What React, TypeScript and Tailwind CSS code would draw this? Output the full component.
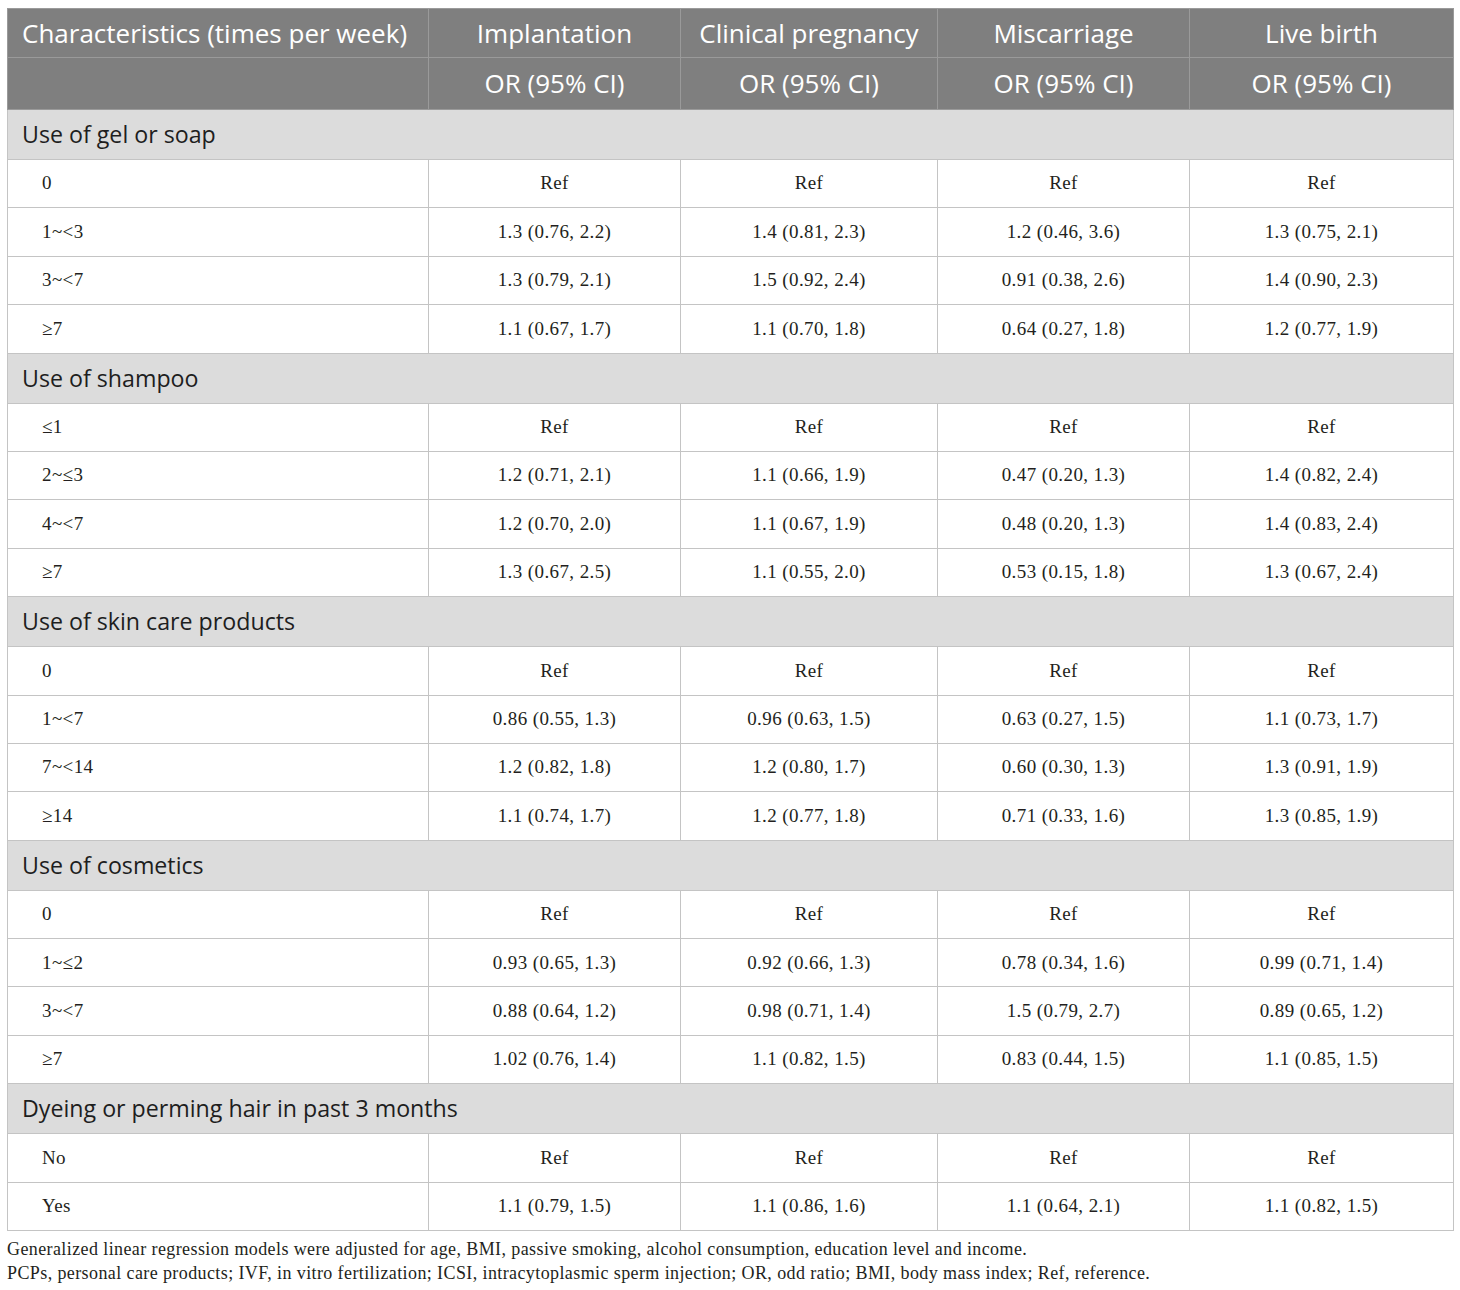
import React from 'react';

type Row = [string, string, string, string, string];
type Section = { title: string; rows: Row[] };

const sections: Section[] = [
  {
    title: 'Use of gel or soap',
    rows: [
      ['0', 'Ref', 'Ref', 'Ref', 'Ref'],
      ['1~<3', '1.3 (0.76, 2.2)', '1.4 (0.81, 2.3)', '1.2 (0.46, 3.6)', '1.3 (0.75, 2.1)'],
      ['3~<7', '1.3 (0.79, 2.1)', '1.5 (0.92, 2.4)', '0.91 (0.38, 2.6)', '1.4 (0.90, 2.3)'],
      ['≥7', '1.1 (0.67, 1.7)', '1.1 (0.70, 1.8)', '0.64 (0.27, 1.8)', '1.2 (0.77, 1.9)'],
    ],
  },
  {
    title: 'Use of shampoo',
    rows: [
      ['≤1', 'Ref', 'Ref', 'Ref', 'Ref'],
      ['2~≤3', '1.2 (0.71, 2.1)', '1.1 (0.66, 1.9)', '0.47 (0.20, 1.3)', '1.4 (0.82, 2.4)'],
      ['4~<7', '1.2 (0.70, 2.0)', '1.1 (0.67, 1.9)', '0.48 (0.20, 1.3)', '1.4 (0.83, 2.4)'],
      ['≥7', '1.3 (0.67, 2.5)', '1.1 (0.55, 2.0)', '0.53 (0.15, 1.8)', '1.3 (0.67, 2.4)'],
    ],
  },
  {
    title: 'Use of skin care products',
    rows: [
      ['0', 'Ref', 'Ref', 'Ref', 'Ref'],
      ['1~<7', '0.86 (0.55, 1.3)', '0.96 (0.63, 1.5)', '0.63 (0.27, 1.5)', '1.1 (0.73, 1.7)'],
      ['7~<14', '1.2 (0.82, 1.8)', '1.2 (0.80, 1.7)', '0.60 (0.30, 1.3)', '1.3 (0.91, 1.9)'],
      ['≥14', '1.1 (0.74, 1.7)', '1.2 (0.77, 1.8)', '0.71 (0.33, 1.6)', '1.3 (0.85, 1.9)'],
    ],
  },
  {
    title: 'Use of cosmetics',
    rows: [
      ['0', 'Ref', 'Ref', 'Ref', 'Ref'],
      ['1~≤2', '0.93 (0.65, 1.3)', '0.92 (0.66, 1.3)', '0.78 (0.34, 1.6)', '0.99 (0.71, 1.4)'],
      ['3~<7', '0.88 (0.64, 1.2)', '0.98 (0.71, 1.4)', '1.5 (0.79, 2.7)', '0.89 (0.65, 1.2)'],
      ['≥7', '1.02 (0.76, 1.4)', '1.1 (0.82, 1.5)', '0.83 (0.44, 1.5)', '1.1 (0.85, 1.5)'],
    ],
  },
  {
    title: 'Dyeing or perming hair in past 3 months',
    rows: [
      ['No', 'Ref', 'Ref', 'Ref', 'Ref'],
      ['Yes', '1.1 (0.79, 1.5)', '1.1 (0.86, 1.6)', '1.1 (0.64, 2.1)', '1.1 (0.82, 1.5)'],
    ],
  },
];

const outcomes = ['Implantation', 'Clinical pregnancy', 'Miscarriage', 'Live birth'];

const sans = "font-['Open_Sans','Noto_Sans',sans-serif]";
const serif = "font-['Liberation_Serif','DejaVu_Serif',serif]";

export default function App() {
  return (
    <div className="min-h-[1290px] w-[1460px] bg-white pl-[7px] pt-[8px]">
      <table className="w-[1446px] table-fixed border-collapse">
        <colgroup>
          <col className="w-[421px]" />
          <col className="w-[252px]" />
          <col className="w-[257px]" />
          <col className="w-[252px]" />
          <col className="w-[264px]" />
        </colgroup>
        <thead className={`${sans} bg-[#7f7f7f] text-[26px] text-white`}>
          <tr className="h-[49px]">
            <th className="whitespace-nowrap border border-[#9a9a9a] px-[14px] text-left font-normal">Characteristics (times per week)</th>
            {outcomes.map((o) => (
              <th key={o} className="border border-[#9a9a9a] text-center font-normal">
                {o}
              </th>
            ))}
          </tr>
          <tr className="h-[52px]">
            <th className="border border-[#9a9a9a]" />
            {outcomes.map((o) => (
              <th key={o} className="border border-[#9a9a9a] text-center font-normal">
                OR (95% CI)
              </th>
            ))}
          </tr>
        </thead>
        <tbody>
          {sections.map((s) => (
            <React.Fragment key={s.title}>
              <tr className="h-[50px] bg-[#dcdcdc]">
                <td colSpan={5} className={`${sans} border border-[#c4c4c4] px-[14px] text-[23.2px] text-[#1e1e1e]`}>
                  {s.title}
                </td>
              </tr>
              {s.rows.map((r) => (
                <tr key={s.title + r[0]} className={`${serif} h-[48.4px] text-[19px] tracking-[0.4px] text-[#231f20]`}>
                  <td className="border border-[#c4c4c4] pl-[34px]">{r[0]}</td>
                  {r.slice(1).map((v, i) => (
                    <td key={i} className="border border-[#c4c4c4] text-center">
                      {v}
                    </td>
                  ))}
                </tr>
              ))}
            </React.Fragment>
          ))}
        </tbody>
      </table>
      <div className={`${serif} mt-[6px] text-[18px] leading-[24px] tracking-[0.4px] text-[#231f20]`}>
        <p>Generalized linear regression models were adjusted for age, BMI, passive smoking, alcohol consumption, education level and income.</p>
        <p>PCPs, personal care products; IVF, in vitro fertilization; ICSI, intracytoplasmic sperm injection; OR, odd ratio; BMI, body mass index; Ref, reference.</p>
      </div>
    </div>
  );
}
